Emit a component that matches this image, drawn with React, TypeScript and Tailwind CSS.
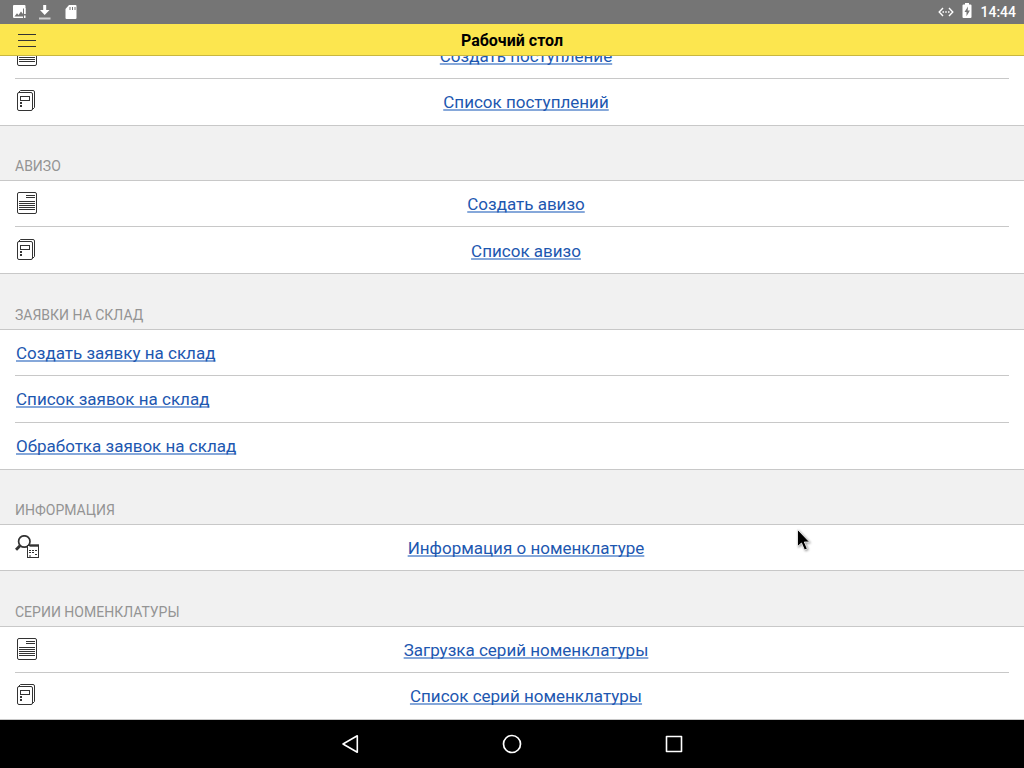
import type { ReactNode } from 'react';

type IconName = 'document' | 'journal' | 'search';
type Item = { label: string; icon?: IconName };
type Section = { title?: string; items: Item[] };

const sections: Section[] = [
  {
    items: [
      { label: 'Создать поступление', icon: 'document' },
      { label: 'Список поступлений', icon: 'journal' },
    ],
  },
  {
    title: 'АВИЗО',
    items: [
      { label: 'Создать авизо', icon: 'document' },
      { label: 'Список авизо', icon: 'journal' },
    ],
  },
  {
    title: 'ЗАЯВКИ НА СКЛАД',
    items: [
      { label: 'Создать заявку на склад' },
      { label: 'Список заявок на склад' },
      { label: 'Обработка заявок на склад' },
    ],
  },
  {
    title: 'ИНФОРМАЦИЯ',
    items: [{ label: 'Информация о номенклатуре', icon: 'search' }],
  },
  {
    title: 'СЕРИИ НОМЕНКЛАТУРЫ',
    items: [
      { label: 'Загрузка серий номенклатуры', icon: 'document' },
      { label: 'Список серий номенклатуры', icon: 'journal' },
    ],
  },
];

function DocumentIcon() {
  return (
    <svg width="24" height="24" viewBox="0 0 24 24" fill="none" stroke="#333" aria-hidden="true">
      <rect x="2.5" y="1.5" width="19" height="21" rx="1.5" />
      <path d="M11 4.5h9M11 6.5h9M4 10.5h16M4 12.5h16M4 14.5h16M4 16.5h16M4 18.5h16" />
    </svg>
  );
}

function JournalIcon() {
  return (
    <svg width="24" height="24" viewBox="0 0 24 24" fill="none" stroke="#333" aria-hidden="true">
      <rect x="2.5" y="3.5" width="15" height="18" rx="1.5" />
      <path d="M3.5 3.5 5.5 1.5h12.500a1.500 1.500 0 0 1 1.500 1.500v15.500l-2 2" />
      <rect x="5.500" y="7.500" width="9" height="4" />
      <path d="M5 13h2v2H5zM5 16h2v2H5z" fill="#333" stroke="none" />
    </svg>
  );
}

function SearchIcon() {
  return (
    <svg width="24" height="24" viewBox="0 0 24 24" fill="none" stroke="#333" aria-hidden="true">
      <circle cx="9.300" cy="6.500" r="5.700" strokeWidth="1.700" />
      <path d="M5 10.800 1 14.800" strokeWidth="3" />
      <rect x="12.500" y="10.500" width="11" height="12" fill="#fff" />
      <path d="M14.500 10.500h9.500" strokeWidth="2.400" />
      <path d="M14 15.500h2M17 15.500h2M20 15.500h2M14 17.500h2M17 17.500h2M20 19.500h2M14 21h2" />
    </svg>
  );
}

const icons: Record<IconName, ReactNode> = {
  document: <DocumentIcon />,
  journal: <JournalIcon />,
  search: <SearchIcon />,
};

function StatusBar() {
  return (
    <div className="flex h-6 shrink-0 items-center justify-between bg-[#757575] px-2 text-white">
      <div className="flex items-center gap-2.5 pl-[3px]">
        <svg width="16" height="16" viewBox="0 0 16 16" aria-label="Изображение">
          <path fill="#fff" fillRule="evenodd" d="M3 1h10.500q1 0 1 1v8H13V4.500h-1V14H3q-1 0-1-1V2q0-1 1-1zM3.500 12.500H12V10L10 7.500 7.500 11 6 9.200z" />
          <path fill="#fff" d="M13 4h1.500v6H13zM13 11.500h1.500V14H13z" />
        </svg>
        <svg width="16" height="16" viewBox="0 0 16 16" aria-label="Загрузка">
          <path fill="#fff" d="M6.200 1h3v5h3.300L7.700 11 3 6h3.200z" />
          <path fill="#d0d0d0" d="M2 13.500h11.500v2H2z" />
        </svg>
        <svg width="16" height="16" viewBox="0 0 16 16" aria-label="Карта памяти">
          <path fill="#fff" fillRule="evenodd" d="M6 1h6.500q1 0 1 1v12q0 1-1 1h-9q-1 0-1-1V5zM6.500 3v3h1V3zM9 3v3h1V3zM11.500 3v3h1V3z" />
        </svg>
      </div>
      <div className="flex items-center gap-2">
        <svg width="16" height="12" viewBox="0 0 16 12" fill="none" stroke="#fff" strokeWidth="1.400" aria-label="Сеть">
          <path d="M5 2 1.200 6 5 10M11 2l3.800 4L11 10" />
          <path d="M4.500 6h1.500M7.250 6h1.500M10 6h1.500" />
        </svg>
        <svg width="10" height="18" viewBox="0 0 10 18" aria-label="Батарея">
          <path fill="#fff" fillRule="evenodd" d="M3 0h4v1.500h1.500q1 0 1 1V14q0 1-1 1h-7q-1 0-1-1V2.500q0-1 1-1H3zM6 3.500 2.500 9H4.500V13.200L7.900 7.500H5.700z" />
        </svg>
        <span className="text-sm font-medium">14:44</span>
      </div>
    </div>
  );
}

function Row({ item }: { item: Item }) {
  return (
    <li className="flex h-[47px] items-center border-b border-[#c8c8c8] pt-0.5 first:h-[46px] last:-mx-[15px] last:px-[15px]">
      {item.icon && <span className="w-7 shrink-0 pb-[3px]">{icons[item.icon]}</span>}
      <span className={item.icon ? 'flex-1 text-center' : 'flex-1 pl-px'}>
        <a
          href="#"
          className="text-[17px] leading-6 text-[#1d57b0] underline decoration-[#86a8da] decoration-2 underline-offset-1 [text-decoration-skip-ink:none]"
        >
          {item.label}
        </a>
      </span>
    </li>
  );
}

export default function App() {
  return (
    <div className="relative flex h-screen flex-col overflow-hidden bg-white font-[Roboto,sans-serif]">
      <StatusBar />
      <header className="grid h-8 shrink-0 grid-cols-[40px_1fr_40px] items-center border-b border-[#c9b73f] bg-[#fce64f] pt-0.5">
        <button type="button" aria-label="Меню" className="flex justify-end pr-1">
          <svg width="18" height="14" viewBox="0 0 18 14" stroke="#333" aria-hidden="true">
            <path d="M0 .5h18M0 6.500h18M0 12.500h18" />
          </svg>
        </button>
        <h1 className="text-center text-base font-bold text-black">Рабочий стол</h1>
      </header>

      <main className="flex min-h-0 flex-1 flex-col overflow-hidden">
        {sections.map((section, i) => (
          <section key={i} className="flex shrink-0 grow flex-col justify-end first:-mt-6">
            {section.title && (
              <h2 className="flex min-h-[55px] grow items-end border-b border-[#c8c8c8] bg-[#f1f1f1] px-[15px] pb-1 text-sm text-[#949494]">
                {section.title}
              </h2>
            )}
            <ul className="px-[15px]">
              {section.items.map((item) => (
                <Row key={item.label} item={item} />
              ))}
            </ul>
          </section>
        ))}
      </main>

      <nav className="flex h-12 shrink-0 items-center justify-center gap-[138px] bg-black">
        <button type="button" aria-label="Назад">
          <svg width="24" height="24" viewBox="0 0 24 24" fill="none" stroke="#fff" strokeWidth="1.600" strokeLinejoin="round">
            <path d="M19.300 3.800v16.400L5 12z" />
          </svg>
        </button>
        <button type="button" aria-label="Домой">
          <svg width="24" height="24" viewBox="0 0 24 24" fill="none" stroke="#fff" strokeWidth="1.700">
            <circle cx="12" cy="12" r="8.500" />
          </svg>
        </button>
        <button type="button" aria-label="Недавние">
          <svg width="24" height="24" viewBox="0 0 24 24" fill="none" stroke="#fff" strokeWidth="1.600" strokeLinejoin="round">
            <rect x="4.500" y="4.500" width="15" height="15" />
          </svg>
        </button>
      </nav>

      <svg
        className="pointer-events-none absolute top-[528px] left-[794px] drop-shadow-[1px_1px_1px_rgba(0,0,0,0.4)]"
        width="20"
        height="26"
        viewBox="0 0 20 26"
        aria-hidden="true"
      >
        <path d="M3.500 1.500v17l4-3.500 3 7 2.800-1.200-3-6.800h5.200z" fill="#000" stroke="#fff" strokeWidth=".8" />
      </svg>
    </div>
  );
}
